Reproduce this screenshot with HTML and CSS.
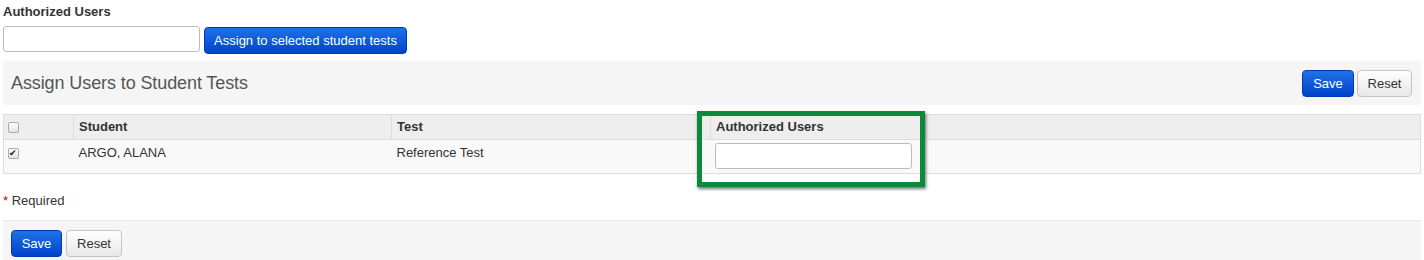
FILE: index.html
```html
<!DOCTYPE html>
<html lang="en">
<head>
  <meta charset="UTF-8">
  <title>Assign Users to Student Tests</title>
  <link rel="stylesheet" href="styles.css">
</head>
<body>
  <div class="page">
    <div class="bulk">
      <label class="bulk-label">Authorized Users</label>
      <div class="bulk-row">
        <input type="text" class="text-input bulk-input">
        <button class="btn btn-primary btn-assign">Assign to selected student tests</button>
      </div>
    </div>

    <div class="panel-head">
      <h2 class="panel-title">Assign Users to Student Tests</h2>
      <div class="actions">
        <button class="btn btn-primary">Save</button>
        <button class="btn btn-default">Reset</button>
      </div>
    </div>

    <div class="table-wrap">
      <table class="grid">
        <thead>
          <tr>
            <th class="col-check"><input type="checkbox" class="check"></th>
            <th class="col-student">Student</th>
            <th class="col-test">Test</th>
            <th>Authorized Users</th>
          </tr>
        </thead>
        <tbody>
          <tr>
            <td class="col-check"><input type="checkbox" class="check" checked></td>
            <td>ARGO, ALANA</td>
            <td>Reference Test</td>
            <td class="cell-input"><input type="text" class="text-input row-input"></td>
          </tr>
        </tbody>
      </table>
      <div class="highlight"></div>
    </div>

    <p class="required"><span class="star">*</span> Required</p>

    <div class="panel-foot">
      <button class="btn btn-primary">Save</button>
      <button class="btn btn-default">Reset</button>
    </div>
  </div>
</body>
</html>
```

FILE: styles.css
```css
body {
  margin: 0;
  font-family: "Liberation Sans", Arial, sans-serif;
  font-size: 13px;
  color: #333;
  background: #fff;
}
.page {
  padding: 0 3px;
}
.bulk {
  padding-top: 4px;
}
.bulk-label {
  display: block;
  font-weight: bold;
  line-height: 16px;
  margin-bottom: 6px;
}
.bulk-row {
  display: flex;
  align-items: flex-start;
  gap: 4px;
}
.text-input {
  box-sizing: border-box;
  height: 26px;
  border: 1px solid #bbb;
  border-radius: 3px;
  background: #fff;
  margin: 0;
  padding: 2px 6px;
  font-family: inherit;
  font-size: 13px;
}
.bulk-input {
  width: 197px;
}
.btn {
  box-sizing: border-box;
  height: 27px;
  padding: 0 12px;
  border-radius: 4px;
  font-family: inherit;
  font-size: 13px;
  cursor: pointer;
}
.btn-primary {
  color: #fff;
  background: linear-gradient(#1f72e6, #0043cc);
  border: 1px solid #0039b3;
}
.btn-default {
  color: #333;
  background: linear-gradient(#fff, #e8e8e8);
  border: 1px solid #c4c4c4;
}
.btn-assign {
  margin-top: 1px;
  width: 203px;
  padding: 0;
}
.panel-head {
  display: flex;
  align-items: center;
  justify-content: space-between;
  height: 44px;
  margin-top: 7px;
  padding: 0 9px 0 8px;
  background: #f5f5f5;
}
.panel-title {
  margin: 0;
  font-size: 18px;
  font-weight: normal;
  color: #555;
  letter-spacing: -0.1px;
}
.actions {
  display: flex;
  gap: 3px;
}
.actions .btn-primary {
  width: 52px;
  padding: 0;
}
.actions .btn-default {
  width: 55px;
  padding: 0;
}
.table-wrap {
  position: relative;
  margin-top: 9px;
}
.grid {
  width: 100%;
  border-collapse: collapse;
  border: 1px solid #ddd;
}
.grid th {
  background: #eee;
  text-align: left;
  font-weight: bold;
  line-height: 16px;
  padding: 4px 5px;
  border-left: 1px solid #ddd;
  border-bottom: 1px solid #ddd;
}
.grid td {
  background: #f9f9f9;
  vertical-align: top;
  line-height: 18px;
  padding: 4px 5px 8px;
}
.grid .col-check {
  width: 60px;
  border-left: none;
  padding-left: 4px;
}
.check {
  appearance: none;
  -webkit-appearance: none;
  position: relative;
  box-sizing: border-box;
  margin: 0;
  width: 11px;
  height: 11px;
  vertical-align: middle;
  border: 1px solid #aaa;
  border-radius: 2px;
  background: linear-gradient(#fdfdfd, #e4e4e4);
}
.check:checked::after {
  content: "\2714";
  position: absolute;
  left: 0;
  top: -2px;
  font-size: 9px;
  line-height: 12px;
  color: #222;
}
.col-student {
  width: 307px;
}
.col-test {
  width: 308px;
}
.grid .cell-input {
  padding: 3px 4px 4px;
}
.row-input {
  width: 197px;
}
.highlight {
  position: absolute;
  left: 694px;
  top: -3px;
  width: 218px;
  height: 66px;
  border: 5px solid #0b8a3b;
  box-shadow: 1px 2px 3px rgba(0, 0, 0, 0.55);
}
.required {
  margin: 0;
  padding-top: 19px;
  line-height: 16px;
}
.star {
  color: #c00;
}
.panel-foot {
  display: flex;
  gap: 4px;
  margin-top: 11px;
  padding: 9px 8px 6px;
  background: #f5f5f5;
  border-top: 1px solid #e8e8e8;
}
.panel-foot .btn-primary {
  width: 51px;
  padding: 0;
}
.panel-foot .btn-default {
  width: 56px;
  padding: 0;
}
```
